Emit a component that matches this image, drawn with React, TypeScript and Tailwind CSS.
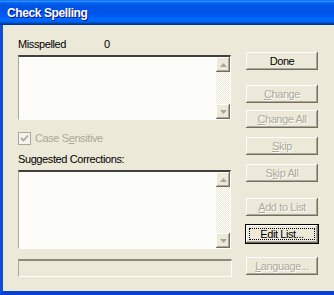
import React from 'react';

const face = 'bg-[#ece9d8]';
const raised = 'shadow-[inset_-1px_-1px_#716f64,inset_1px_1px_#ffffff,inset_-2px_-2px_#aca899]';

const ScrollButton: React.FC<{ dir: 'up' | 'down' }> = ({ dir }) => (
  <div className={`w-[14px] h-[15px] ${face} ${raised} flex items-center justify-center`}>
    <svg width="7" height="4" viewBox="0 0 7 4">
      {dir === 'up' ? <path d="M3.5 0 L7 4 L0 4 Z" fill="#aca899" /> : <path d="M0 0 L7 0 L3.5 4 Z" fill="#aca899" />}
    </svg>
  </div>
);

const ListBox: React.FC<{ height: string }> = ({ height }) => (
  <div className={`w-[213px] ${height} flex border-t-2 border-l border-t-[#404040] border-l-[#aca899] border-b border-r border-b-white border-r-white bg-[#fcfdf8]`}>
    <div className="flex-1" />
    <div className="w-[14px] flex flex-col bg-[conic-gradient(#ece9d8_25%,#ffffff_0_50%,#ece9d8_0_75%,#ffffff_0)] bg-[length:2px_2px]">
      <ScrollButton dir="up" />
      <div className="flex-1" />
      <ScrollButton dir="down" />
    </div>
  </div>
);

interface BtnProps {
  label: React.ReactNode;
  disabled?: boolean;
  isDefault?: boolean;
  className?: string;
}

const Btn: React.FC<BtnProps> = ({ label, disabled, isDefault, className = '' }) => (
  <div
    className={`relative w-[72px] h-[18px] ${face} ${raised} flex items-center justify-center text-[11px] tracking-[-0.4px] leading-none ${
      disabled ? 'text-[#aca899] [text-shadow:1px_1px_#ffffff]' : 'text-black'
    } ${isDefault ? 'outline outline-1 outline-black' : ''} ${className}`}
  >
    {label}
    {isDefault && <div className="absolute inset-[3px] border border-dotted border-black" />}
  </div>
);

export default function App() {
  return (
    <div className="w-[334px] h-[295px] overflow-hidden flex flex-col bg-[#ece9d8] font-['Liberation_Sans',Arial,sans-serif]">
      <div className="h-[25px] shrink-0 flex items-center pl-[7px] bg-[linear-gradient(180deg,#0058ee_0%,#3a93ff_4%,#288eff_6%,#127dff_8%,#036ffc_10%,#0262ee_14%,#0057e5_20%,#0054e3_24%,#0055eb_56%,#005bf5_66%,#026afe_76%,#0062ef_86%,#0052d6_92%,#0040ab_94%,#003092_100%)]">
        <span className="text-white font-bold text-[12px] tracking-[-0.4px] [text-shadow:1px_1px_#0f1089]">Check Spelling</span>
      </div>

      <div className="flex-1 flex border-l-[3px] border-b-[4px] border-l-[#0a4ee4] border-b-[#0a3fd0]">
        <div className="w-[229px] pl-[15px] flex flex-col text-[11px] tracking-[-0.4px] text-black">
          <div className="mt-[13px] h-[13px] leading-[13px] flex">
            <span className="w-[86px]">Misspelled</span>
            <span>0</span>
          </div>
          <div className="mt-[4px]">
            <ListBox height="h-[65px]" />
          </div>

          <div className="mt-[12px] h-[13px] flex items-center gap-[4px]">
            <div className="w-[13px] h-[13px] border border-[#aca899] bg-[#f4f3ee] flex items-center justify-center">
              <svg width="9" height="9" viewBox="0 0 9 9">
                <path d="M1 4 L3.5 6.5 L8 1.5" stroke="#aca899" strokeWidth="1.8" fill="none" />
              </svg>
            </div>
            <span className="text-[#aca899] leading-[13px]">
              Case S<span className="underline">e</span>nsitive
            </span>
          </div>

          <div className="mt-[8px] h-[13px] leading-[13px]">Suggested Corrections:</div>
          <div className="mt-[4px]">
            <ListBox height="h-[79px]" />
          </div>

          <div className="mt-[10px] w-[214px] h-[18px] border-t-2 border-l border-t-[#8c8a80] border-l-[#aca899] border-b border-r border-b-white border-r-white" />
        </div>

        <div className="pl-[14px] flex flex-col">
          <Btn label="Done" className="mt-[27px]" />
          <Btn label={<span><span className="underline">C</span>hange</span>} disabled className="mt-[15px]" />
          <Btn label={<span><span className="underline">C</span>hange All</span>} disabled className="mt-[7px]" />
          <Btn label={<span><span className="underline">S</span>kip</span>} disabled className="mt-[9px]" />
          <Btn label={<span>S<span className="underline">k</span>ip All</span>} disabled className="mt-[9px]" />
          <Btn label={<span><span className="underline">A</span>dd to List</span>} disabled className="mt-[16px]" />
          <Btn label="Edit List..." isDefault className="mt-[9px]" />
          <Btn label={<span><span className="underline">L</span>anguage...</span>} disabled className="mt-[14px]" />
        </div>
      </div>
    </div>
  );
}
